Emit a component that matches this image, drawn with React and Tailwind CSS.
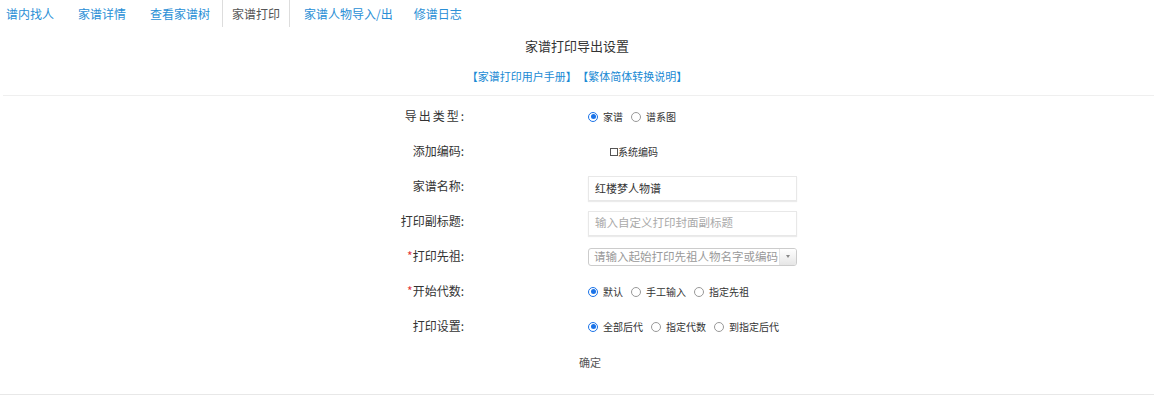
import React from 'react';

const tabs = [
  { name: '谱内找人', cls: 'pl-[6px] pr-3' },
  { name: '家谱详情', cls: 'px-3' },
  { name: '查看家谱树', cls: 'px-3' },
  { name: '家谱打印', cls: 'px-[9px] border-x border-[#dddddd] text-[#555555]', active: true },
  { name: '家谱人物导入/出', cls: 'pl-[14px] pr-3' },
  { name: '修谱日志', cls: 'pl-[9px] pr-3' },
];

const Radio = ({ checked, label }) => (
  <label className="flex items-center mr-[8px]">
    <span
      className={
        checked
          ? 'w-[10px] h-[10px] rounded-full border border-[#1a73e8] flex items-center justify-center bg-white'
          : 'w-[10px] h-[10px] rounded-full border border-[#999999] bg-white'
      }
    >
      {checked && <span className="w-[5px] h-[5px] rounded-full bg-[#1a73e8]" />}
    </span>
    <span className="ml-[5px] text-[10px] leading-[12px] text-[#333333]">{label}</span>
  </label>
);

const Row = ({ label, required, tracking, children, fieldCls = '' }) => (
  <div className="flex items-center h-[35px]">
    <div className="w-[464px] text-right text-[12px] leading-[16px] text-[#333333] pb-[2px]">
      {required && <span className="text-[#e4393c]">*</span>}
      <span className={tracking ? 'tracking-[2px]' : ''}>{label}</span>:
    </div>
    <div className={`ml-[124px] flex items-center ${fieldCls}`}>{children}</div>
  </div>
);

export default function App() {
  return (
    <div
      className="w-[1154px] h-[397px] bg-white overflow-hidden"
      style={{ fontFamily: '"Noto Sans CJK SC", "Liberation Sans", sans-serif' }}
    >
      {/* tabs */}
      <div className="flex h-[27px] text-[12px] text-[#2a8fd6]">
        {tabs.map((t) => (
          <div key={t.name} className={`flex items-center pt-[1px] ${t.cls}`}>
            {t.name}
          </div>
        ))}
      </div>

      <div className="mt-[9px] text-center text-[13px] leading-[20px] text-[#333333]">家谱打印导出设置</div>
      <div className="mt-[10px] text-center text-[11px] leading-[20px] text-[#1a8ad4]">
        <span>【家谱打印用户手册】</span>
        <span className="ml-[6px]">【繁体简体转换说明】</span>
      </div>
      <div className="mt-[9px] ml-[3px] h-px bg-[#efefef]" />

      <div className="pt-[3px]">
        <Row label="导出类型" tracking>
          <Radio checked label="家谱" />
          <Radio label="谱系图" />
        </Row>
        <Row label="添加编码" fieldCls="pl-[22px]">
          <span className="w-[8px] h-[8px] border border-[#555555] bg-white" />
          <span className="text-[10px] text-[#333333]">系统编码</span>
        </Row>
        <Row label="家谱名称" fieldCls="pt-[4px]">
          <div className="w-[209px] h-[25px] border border-[#e8e8e8] shadow-[0_1px_1px_rgba(0,0,0,0.08)] flex items-center pl-[6px] text-[11px] text-[#333333]">
            红楼梦人物谱
          </div>
        </Row>
        <Row label="打印副标题" fieldCls="pt-[3px]">
          <div className="w-[209px] h-[25px] border border-[#e8e8e8] shadow-[0_1px_1px_rgba(0,0,0,0.08)] flex items-center pl-[6px] text-[11.5px] text-[#aaaaaa]">
            输入自定义打印封面副标题
          </div>
        </Row>
        <Row label="打印先祖" required>
          <div className="w-[209px] h-[18px] border border-[#cccccc] rounded-[3px] flex items-stretch overflow-hidden">
            <div className="flex-1 min-w-0 flex items-center pl-[5px] text-[11.5px] text-[#999999] whitespace-nowrap">
              请输入起始打印先祖人物名字或编码
            </div>
            <div className="w-[17px] shrink-0 border-l border-[#e4e4e4] bg-gradient-to-b from-[#ffffff] to-[#e6e6e6] flex items-center justify-center">
              <span className="w-0 h-0 border-x-[2px] border-x-transparent border-t-[3px] border-t-[#888888]" />
            </div>
          </div>
        </Row>
        <Row label="开始代数" required>
          <Radio checked label="默认" />
          <Radio label="手工输入" />
          <Radio label="指定先祖" />
        </Row>
        <Row label="打印设置">
          <Radio checked label="全部后代" />
          <Radio label="指定代数" />
          <Radio label="到指定后代" />
        </Row>
        <div className="h-[35px] flex items-center justify-center pl-[26px] pt-[2px] text-[11px] text-[#555555]">确定</div>
      </div>
      <div className="mt-[15px] h-px bg-[#e8e8e8]" />
    </div>
  );
}
